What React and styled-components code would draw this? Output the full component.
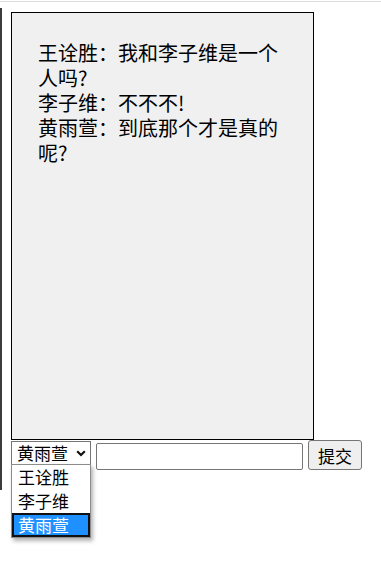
import styled, { createGlobalStyle } from 'styled-components'
import { useState } from 'react'

const font = '"Noto Sans CJK SC", "Noto Sans", sans-serif'

const GlobalStyle = createGlobalStyle`
    html, body {
        margin: 0;
        background: #fff;
    }
    body {
        font-family: ${font};
        color: #000;
    }
`

const speakers = ['王诠胜', '李子维', '黄雨萱']

const messages = [
    { who: '王诠胜', text: '我和李子维是一个人吗?' },
    { who: '李子维', text: '不不不!' },
    { who: '黄雨萱', text: '到底那个才是真的呢?' },
]

function App() {
    const [speaker, setSpeaker] = useState('黄雨萱')
    const [text, setText] = useState('')

    return (
        <Screen>
            <GlobalStyle />
            <TopRule />
            <EdgeStrip />
            <Page>
                <ChatBox>
                    {messages.map((m, i) => (
                        <Line key={i}>{m.who}：{m.text}</Line>
                    ))}
                </ChatBox>
                <Form>
                    <SelectWrap>
                        <Select value={speaker} onChange={(e) => setSpeaker(e.target.value)}>
                            {speakers.map((s) => (
                                <option key={s} value={s}>{s}</option>
                            ))}
                        </Select>
                        <Chevron viewBox="0 0 10 7" aria-hidden="true">
                            <path d="M1.2 1.2 L5 5 L8.8 1.2" />
                        </Chevron>
                        <Menu>
                            {speakers.map((s) => (
                                <MenuItem key={s} $active={s === speaker} onClick={() => setSpeaker(s)}>
                                    {s}
                                </MenuItem>
                            ))}
                        </Menu>
                    </SelectWrap>
                    <Input value={text} onChange={(e) => setText(e.target.value)} />
                    <Button>提交</Button>
                </Form>
            </Page>
        </Screen>
    )
}

const Screen = styled.div`
    position: relative;
    min-height: 100vh;
    box-sizing: border-box;
    padding-top: 1px;
`

const TopRule = styled.div`
    height: 1px;
    background: #dcdcdc;
`

const EdgeStrip = styled.div`
    position: absolute;
    left: 0;
    top: 8px;
    width: 2px;
    height: 482px;
    background: #3c3c3c;
`

const Page = styled.div`
    padding: 10px 0 0 11px;
`

const ChatBox = styled.div`
    box-sizing: border-box;
    width: 303px;
    height: 428px;
    padding: 27px 26px;
    background: #f0f0f0;
    border: 1px solid #000;
`

const Line = styled.div`
    font-size: 20px;
    line-height: 25px;
`

const Form = styled.div`
    display: flex;
    align-items: flex-start;
    gap: 5px;
`

const SelectWrap = styled.div`
    position: relative;
    margin-top: 1px;
    z-index: 3;
`

const Select = styled.select`
    appearance: none;
    display: block;
    box-sizing: border-box;
    width: 80px;
    height: 24px;
    margin: 0;
    padding: 0 0 0 5px;
    font-family: ${font};
    font-size: 17px;
    line-height: 22px;
    color: #000;
    background: #fff;
    border: 1px solid #767676;
    border-radius: 0;
    outline: none;
`

const Chevron = styled.svg`
    position: absolute;
    right: 5px;
    top: 9px;
    width: 10px;
    height: 7px;
    fill: none;
    stroke: #111;
    stroke-width: 2.2;
    pointer-events: none;
`

const Menu = styled.div`
    position: absolute;
    left: 0;
    top: 23px;
    box-sizing: border-box;
    width: 80px;
    padding: 0;
    background: #fff;
    border: 1px solid #8c8c8c;
    box-shadow: 2px 3px 4px rgba(0, 0, 0, 0.3);
`

const MenuItem = styled.div`
    box-sizing: border-box;
    height: 24px;
    padding-left: ${(p) => (p.$active ? '4px' : '6px')};
    font-family: ${font};
    font-size: 17px;
    line-height: ${(p) => (p.$active ? '20px' : '24px')};
    white-space: nowrap;
    color: ${(p) => (p.$active ? '#fff' : '#000')};
    background: ${(p) => (p.$active ? '#1e90ff' : '#fff')};
    border: ${(p) => (p.$active ? '2px solid #111' : '0')};
    cursor: default;
`

const Input = styled.input`
    box-sizing: border-box;
    width: 207px;
    height: 27px;
    margin: 3px 0 0;
    padding: 1px 4px;
    font-family: ${font};
    font-size: 16px;
    border: 1px solid #767676;
    border-radius: 2px;
    background: #fff;
`

const Button = styled.button`
    box-sizing: border-box;
    width: 54px;
    height: 30px;
    margin: 0;
    padding: 0;
    font-family: ${font};
    font-size: 17px;
    color: #000;
    background: #efefef;
    border: 1px solid #767676;
    border-radius: 3px;
`

export default App
